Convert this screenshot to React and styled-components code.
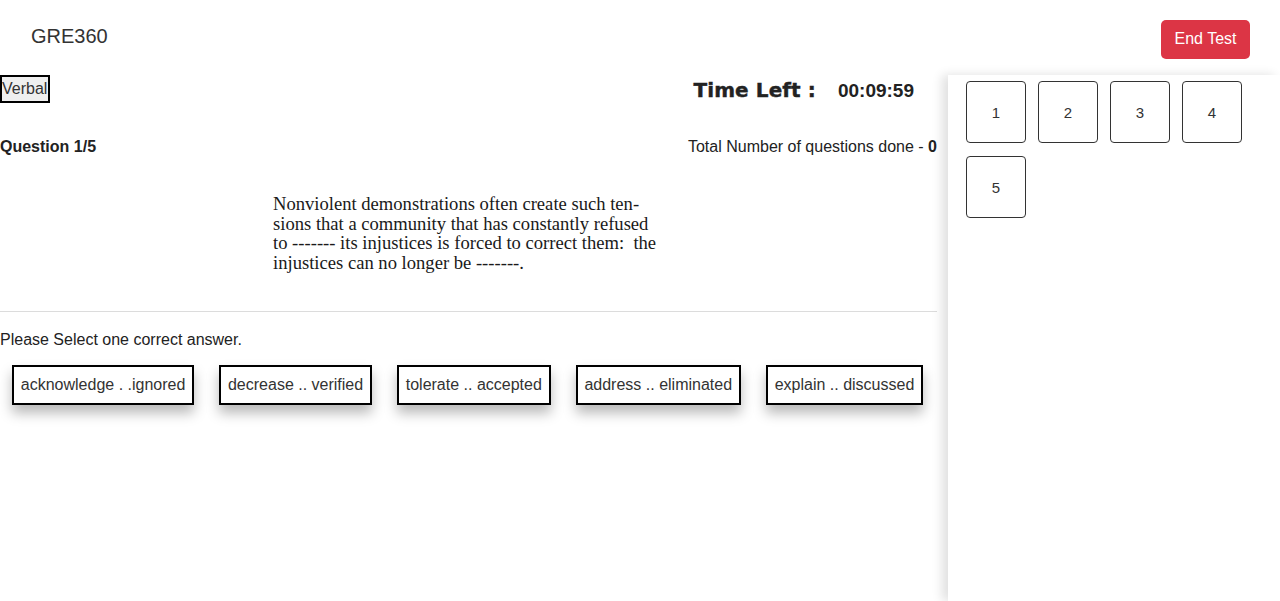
import React from 'react';
import styled, { createGlobalStyle } from 'styled-components';

const GlobalStyle = createGlobalStyle`
  body {
    margin: 0;
    font-family: 'Liberation Sans', Arial, sans-serif;
    color: #212529;
    background: #fff;
  }
`;

const Page = styled.div`
  height: 601px;
  overflow: hidden;
  display: flex;
  flex-direction: column;
`;

const Header = styled.header`
  display: flex;
  align-items: center;
  justify-content: space-between;
  height: 75px;
  padding: 0 30px 0 31px;
  box-sizing: border-box;
`;

const Brand = styled.div`
  font-size: 20px;
  color: #333;
  margin-bottom: 2px;
`;

const EndButton = styled.button`
  background: #dc3545;
  color: #fff;
  border: none;
  border-radius: 5px;
  font-family: 'Liberation Sans', Arial, sans-serif;
  font-size: 16px;
  width: 89px;
  height: 39px;
  margin-top: 3px;
`;

const Body = styled.div`
  display: flex;
  flex: 1;
`;

const Main = styled.main`
  width: 937px;
`;

const TopRow = styled.div`
  display: flex;
  align-items: center;
  justify-content: space-between;
  height: 28px;
  padding-right: 23px;
`;

const SectionTag = styled.button`
  font-family: 'Liberation Sans', Arial, sans-serif;
  font-size: 16px;
  color: #333;
  background: #efefef;
  border: 2px solid #000;
  padding: 0;
  height: 28px;
  width: 50px;
  text-align: left;
`;

const Timer = styled.div`
  display: flex;
  align-items: baseline;
  gap: 22px;
  color: #222;
  margin-top: 1px;
`;

const TimerLabel = styled.span`
  font-family: 'DejaVu Sans', sans-serif;
  font-weight: 900;
  font-size: 20px;
  letter-spacing: 0.1px;
  -webkit-text-stroke: 0.4px #222;
`;

const TimerValue = styled.span`
  font-weight: bold;
  font-size: 19px;
`;

const InfoRow = styled.div`
  display: flex;
  justify-content: space-between;
  align-items: center;
  margin-top: 35px;
  font-size: 16px;
  color: #222;
`;

const QuestionNo = styled.span`
  font-weight: bold;
`;

const Passage = styled.p`
  width: 400px;
  margin: 38px 0 0 273px;
  font-family: 'Liberation Serif', 'Times New Roman', serif;
  font-size: 18.6px;
  line-height: 19.7px;
  color: #1a1a1a;
`;

const Divider = styled.hr`
  border: none;
  border-top: 1px solid #dcdcdc;
  margin: 38px 0 0;
`;

const Prompt = styled.div`
  margin-top: 19px;
  font-size: 16px;
  color: #222;
`;

const Options = styled.div`
  display: flex;
  gap: 25px;
  margin: 16px 0 0 12px;
`;

const Option = styled.button`
  font-family: 'Liberation Sans', Arial, sans-serif;
  font-size: 16px;
  color: #333;
  background: #fff;
  border: 2px solid #000;
  height: 40px;
  padding: 0 6.8px;
  box-shadow: 0 8px 12px rgba(0, 0, 0, 0.28);
`;

const Panel = styled.aside`
  flex: 1;
  margin-left: 11px;
  box-shadow: -6px 0 10px rgba(0, 0, 0, 0.12);
  padding: 6px 0 0 18px;
  display: flex;
  flex-wrap: wrap;
  align-content: flex-start;
  gap: 13px 12px;
  width: 296px;
`;

const NumberBox = styled.button`
  width: 60px;
  height: 62px;
  border: 1px solid #333;
  border-radius: 4px;
  background: #fff;
  font-family: 'Liberation Sans', Arial, sans-serif;
  font-size: 15px;
  color: #333;
`;

const options = [
  'acknowledge . .ignored',
  'decrease .. verified',
  'tolerate .. accepted',
  'address .. eliminated',
  'explain .. discussed',
];

export default function App() {
  return (
    <>
      <GlobalStyle />
      <Page>
        <Header>
          <Brand>GRE360</Brand>
          <EndButton>End Test</EndButton>
        </Header>
        <Body>
          <Main>
            <TopRow>
              <SectionTag>Verbal</SectionTag>
              <Timer>
                <TimerLabel>Time Left :</TimerLabel>
                <TimerValue>00:09:59</TimerValue>
              </Timer>
            </TopRow>
            <InfoRow>
              <QuestionNo>Question 1/5</QuestionNo>
              <span>
                Total Number of questions done - <b>0</b>
              </span>
            </InfoRow>
            <Passage>
              Nonviolent demonstrations often create such ten-
              <br />
              sions that a community that has constantly refused
              <br />
              to ------- its injustices is forced to correct them:&nbsp; the
              <br />
              injustices can no longer be -------.
            </Passage>
            <Divider />
            <Prompt>Please Select one correct answer.</Prompt>
            <Options>
              {options.map((o) => (
                <Option key={o}>{o}</Option>
              ))}
            </Options>
          </Main>
          <Panel>
            {[1, 2, 3, 4, 5].map((n) => (
              <NumberBox key={n}>{n}</NumberBox>
            ))}
          </Panel>
        </Body>
      </Page>
    </>
  );
}
